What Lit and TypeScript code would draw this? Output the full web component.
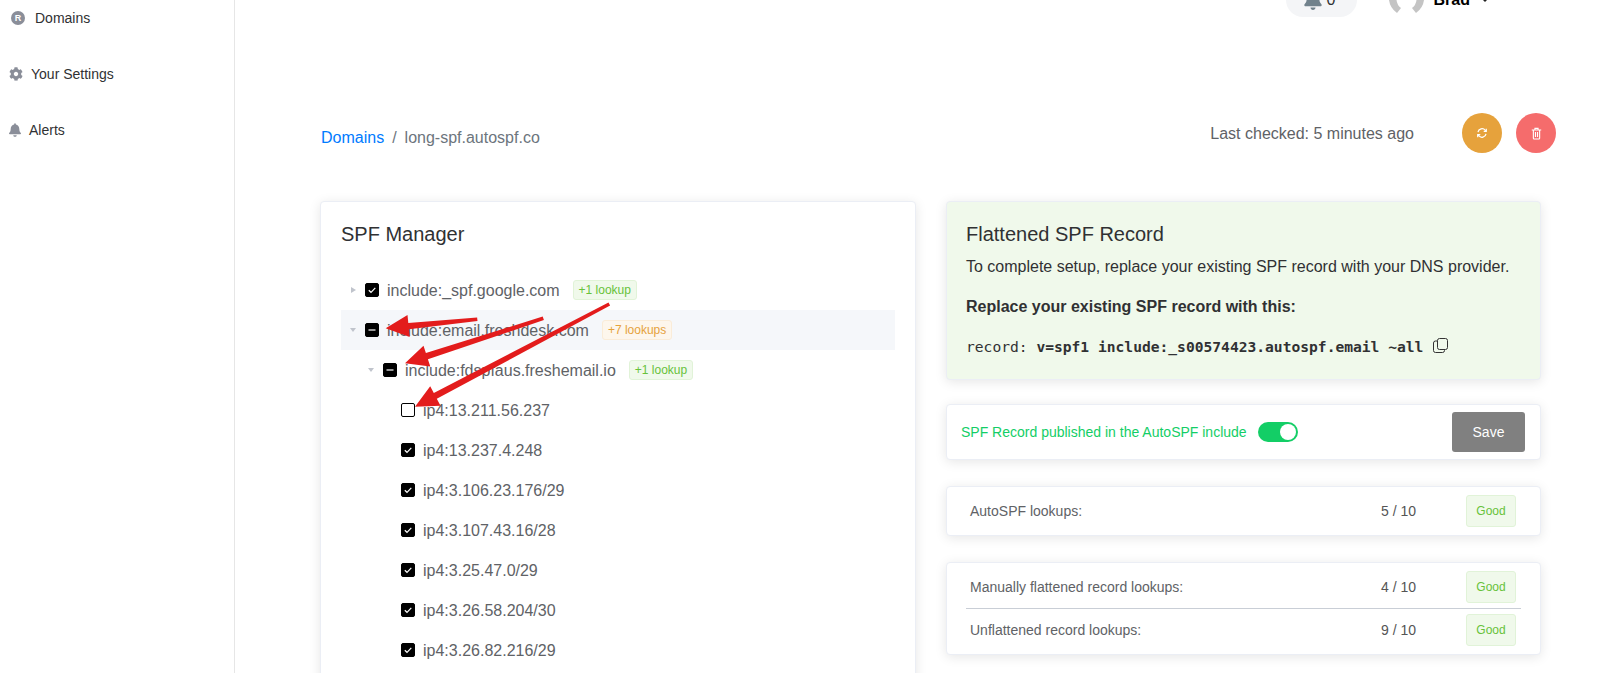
import { LitElement, html, css, svg } from "lit";
import { customElement } from "lit/decorators.js";

const BELL = "M224 512c35.32 0 63.97-28.65 63.97-64H160.03c0 35.35 28.65 64 63.97 64zm215.39-149.71c-19.32-20.76-55.47-51.99-55.47-154.29 0-77.7-54.48-139.9-127.94-155.16V32c0-17.67-14.32-32-31.98-32s-31.98 14.33-31.98 32v20.84C118.56 68.1 64.08 130.3 64.08 208c0 102.3-36.15 133.53-55.47 154.29-6 6.45-8.66 14.16-8.61 21.71.11 16.4 12.98 32 32.1 32h383.8c19.12 0 32-15.6 32.1-32 .05-7.55-2.61-15.27-8.61-21.71z";
const COG = "M487.4 315.7l-42.6-24.6c4.3-23.2 4.3-47 0-70.2l42.6-24.6c4.9-2.8 7.1-8.6 5.5-14-11.1-35.6-30-67.8-54.7-94.6-3.8-4.1-10-5.1-14.8-2.3L380.8 110c-17.9-15.4-38.5-27.3-60.8-35.1V25.8c0-5.6-3.9-10.5-9.4-11.7-36.7-8.2-74.3-7.8-109.2 0-5.5 1.2-9.4 6.1-9.4 11.7V75c-22.2 7.9-42.8 19.8-60.8 35.1L88.7 85.5c-4.9-2.8-11-1.9-14.8 2.3-24.7 26.7-43.6 58.9-54.7 94.6-1.7 5.4.6 11.2 5.5 14L67.3 221c-4.3 23.2-4.3 47 0 70.2l-42.6 24.6c-4.9 2.8-7.1 8.6-5.5 14 11.1 35.6 30 67.8 54.7 94.6 3.8 4.1 10 5.1 14.8 2.3l42.6-24.6c17.9 15.4 38.5 27.3 60.8 35.1v49.2c0 5.6 3.9 10.5 9.4 11.7 36.7 8.2 74.3 7.8 109.2 0 5.5-1.2 9.4-6.1 9.4-11.7v-49.2c22.2-7.9 42.8-19.8 60.8-35.1l42.6 24.6c4.9 2.8 11 1.9 14.8-2.3 24.7-26.7 43.6-58.9 54.7-94.6 1.5-5.5-.7-11.3-5.6-14.1zM256 336c-44.1 0-80-35.9-80-80s35.9-80 80-80 80 35.9 80 80-35.9 80-80 80z";

type Row = { level: number; text: string; arrow?: "right" | "down"; state: "on" | "mixed" | "off"; tag?: string; warn?: boolean; hl?: boolean };

const ROWS: Row[] = [
  { level: 0, text: "include:_spf.google.com", arrow: "right", state: "on", tag: "+1 lookup" },
  { level: 0, text: "include:email.freshdesk.com", arrow: "down", state: "mixed", tag: "+7 lookups", warn: true, hl: true },
  { level: 1, text: "include:fdspfaus.freshemail.io", arrow: "down", state: "mixed", tag: "+1 lookup" },
  { level: 2, text: "ip4:13.211.56.237", state: "off" },
  { level: 2, text: "ip4:13.237.4.248", state: "on" },
  { level: 2, text: "ip4:3.106.23.176/29", state: "on" },
  { level: 2, text: "ip4:3.107.43.16/28", state: "on" },
  { level: 2, text: "ip4:3.25.47.0/29", state: "on" },
  { level: 2, text: "ip4:3.26.58.204/30", state: "on" },
  { level: 2, text: "ip4:3.26.82.216/29", state: "on" },
];

const ARROWS = [
  [477.3, 319.3, 385.7, 328.3],
  [543.3, 318.3, 405, 363.3],
  [609.3, 304, 415, 406.7],
];

function arrowPoints([x1, y1, x2, y2]: number[]) {
  const dx = x2 - x1, dy = y2 - y1;
  const len = Math.hypot(dx, dy);
  const ux = dx / len, uy = dy / len;
  const nx = -uy, ny = ux;
  const head = 23, hw = 11;
  const bx = x2 - ux * head, by = y2 - uy * head;
  const p = [
    [x1 + nx * 1.8, y1 + ny * 1.8],
    [bx + nx * 3.2, by + ny * 3.2],
    [bx + nx * hw, by + ny * hw],
    [x2, y2],
    [bx - nx * hw, by - ny * hw],
    [bx - nx * 3.2, by - ny * 3.2],
    [x1 - nx * 1.8, y1 - ny * 1.8],
  ];
  return p.map((q) => q.map((v) => v.toFixed(1)).join(",")).join(" ");
}

@customElement("app-root")
export class AppRoot extends LitElement {
  static styles = css`
    :host {
      display: block;
      position: relative;
      height: 673px;
      overflow: hidden;
      background: #fff;
      font-family: "Liberation Sans", Arial, sans-serif;
      color: #303133;
    }
    * { box-sizing: border-box; }
    .layout { display: grid; grid-template-columns: 235px 1fr; height: 673px; }
    .side { border-right: 1px solid #e6e6e6; display: flex; flex-direction: column; gap: 20px; padding-left: 9px; }
    .nav { height: 36px; display: flex; align-items: center; gap: 8px; font-size: 14px; color: #303133; }
    .nav svg { fill: #8a8e99; display: block; }
    .r-icon {
      width: 14px; height: 14px; border-radius: 50%; background: #8a8e99; color: #fff;
      font-size: 9px; font-weight: 700; display: flex; align-items: center; justify-content: center;
      margin: 0 2px 0 2px;
    }
    .main { padding: 0 41px 0 85px; min-width: 0; }
    .top { height: 17px; overflow: hidden; display: flex; justify-content: flex-end; align-items: flex-end; padding-right: 68px; }
    .pill {
      width: 71px; height: 40px; flex: none; border-radius: 0 0 17px 17px / 0 0 17px 17px; background: #f4f5f7;
      display: flex; align-items: center; justify-content: flex-start; padding: 6px 0 0 18px; gap: 5px;
      font-size: 16px; color: #303133;
    }
    .pill svg { fill: #71828c; display: block; }
    .avatar { margin-left: 32px; display: block; flex: none; align-self: flex-start; }
    .user { margin-left: 10px; height: 40px; padding-top: 6px; display: flex; align-items: center; font-size: 16px; font-weight: 700; color: #000; gap: 12px; flex: none; }
    .caret { width: 0; height: 0; border: 3px solid transparent; border-top-color: #222; border-bottom: 0; }
    .head { margin-top: 96px; height: 40px; display: flex; align-items: center; font-size: 16px; }
    .crumbs { flex: 1; padding: 10px 0 0 1px; color: #6c757d; display: flex; gap: 8px; }
    .crumbs a { color: #007bff; text-decoration: none; }
    .checked { color: #606266; margin-right: 48px; padding-top: 2px; }
    .round { width: 40px; height: 40px; border-radius: 50%; display: flex; align-items: center; justify-content: center; }
    .round svg { fill: none; stroke: #fff; stroke-width: 1.4; display: block; }
    .sync { background: #e6a23c; }
    .del { background: #f56c6c; margin-left: 14px; }
    .grid { margin: 48px 15px 0 0; display: grid; grid-template-columns: 596px 595px; gap: 30px; align-items: start; }
    .card { background: #fff; border: 1px solid #ebeef5; border-radius: 4px; box-shadow: 0 2px 12px rgba(0, 0, 0, 0.1); }
    .mgr { padding: 20px; }
    h2 { margin: 0; font-size: 20px; font-weight: 400; line-height: 24px; color: #303133; }
    .tree { margin-top: 24px; }
    .row { height: 40px; display: flex; align-items: center; font-size: 16px; color: #606266; }
    .row.hl { background: #f5f7fa; }
    .label { padding-top: 2px; }
    .slot { width: 24px; flex: none; display: flex; justify-content: center; }
    .tri-r { width: 0; height: 0; border-left: 5px solid #c0c4cc; border-top: 3.5px solid transparent; border-bottom: 3.5px solid transparent; }
    .tri-d { width: 0; height: 0; border-top: 4px solid #c0c4cc; border-left: 3.5px solid transparent; border-right: 3.5px solid transparent; }
    .box { width: 14px; height: 14px; flex: none; border-radius: 2px; background: #000; border: 1px solid #000; margin-right: 8px; display: flex; align-items: center; justify-content: center; }
    .box.off { background: #fff; }
    .box svg { display: block; fill: none; stroke: #fff; stroke-width: 1.2; }
    .tag { margin-left: 13px; height: 20px; padding: 0 5px; border: 1px solid #e1f3d8; background: #f0f9eb; color: #67c23a; border-radius: 3px; font-size: 12px; line-height: 18px; white-space: nowrap; }
    .tag.warn { border-color: #faecd8; background: #fdf6ec; color: #e6a23c; }
    .right { display: flex; flex-direction: column; }
    .green { background: #f0f9eb; height: 179px; padding: 20px 19px; }
    .green p { margin: 9px 0 0; font-size: 16px; line-height: 24px; color: #303133; white-space: nowrap; }
    .green p.b { margin-top: 16px; font-weight: 700; }
    .code { margin-top: 17px; display: flex; align-items: center; height: 20px; font-family: "DejaVu Sans Mono", monospace; font-size: 14.62px; color: #303133; white-space: pre; gap: 10px; }
    .code b { font-weight: 700; }
    .code svg { display: block; fill: none; stroke: #333; stroke-width: 1; margin-top: -2px; }
    .publish { margin-top: 24px; height: 56px; padding: 0 15px 0 14px; display: flex; align-items: center; font-size: 14px; color: #13ce66; }
    .toggle { width: 40px; height: 20px; border-radius: 10px; background: #13ce66; margin-left: 11px; display: flex; justify-content: flex-end; padding: 2px; }
    .toggle i { width: 16px; height: 16px; border-radius: 50%; background: #fff; display: block; }
    .save { margin-left: auto; width: 73px; height: 40px; background: #808080; color: #fff; border-radius: 3px; display: flex; align-items: center; justify-content: center; font-size: 14px; }
    .stat { margin-top: 26px; padding: 8px 19px; }
    .line { display: grid; grid-template-columns: 1fr 85px 50px; align-items: center; padding: 0 5px 0 4px; height: 32px; font-size: 14px; color: #606266; }
    .val { color: #555; }
    .good { height: 32px; border: 1px solid #e1f3d8; background: #f0f9eb; color: #67c23a; border-radius: 3px; font-size: 12px; display: flex; align-items: center; justify-content: center; }
    .div { height: 1px; background: #c9ced6; margin: 5px 0; }
    .overlay { position: absolute; left: 0; top: 0; pointer-events: none; }
  `;

  private box(state: Row["state"]) {
    if (state === "off") return html`<span class="box off"></span>`;
    if (state === "mixed")
      return html`<span class="box"><svg width="8" height="8" viewBox="0 0 8 8"><path d="M0.5 4h7" /></svg></span>`;
    return html`<span class="box"><svg width="10" height="10" viewBox="0 0 10 10"><path d="M1.8 5.2l2.2 2.1 4.3-4.4" /></svg></span>`;
  }

  render() {
    return html`
      <div class="layout">
        <aside class="side">
          <div class="nav"><span class="r-icon">R</span>Domains</div>
          <div class="nav"><svg width="14" height="14" viewBox="0 0 512 512"><path d=${COG} /></svg>Your Settings</div>
          <div class="nav"><svg width="12" height="14" viewBox="0 0 448 512"><path d=${BELL} /></svg>Alerts</div>
        </aside>
        <main class="main">
          <div class="top">
            <div class="pill">
              <svg width="18" height="20" viewBox="0 0 448 512"><path d=${BELL} /></svg><span>0</span>
            </div>
            <svg class="avatar" width="35" height="13" viewBox="0 0 35 13">
              <path fill="#c4c4c4" d="M0 0h7.5q.5 5 4.5 8l-4 5Q1 8 0 0zM35 0h-7.5q-.5 5-4.5 8l4 5Q34 8 35 0z" />
            </svg>
            <div class="user"><span>Brad</span><span class="caret"></span></div>
          </div>
          <div class="head">
            <div class="crumbs"><a>Domains</a><span>/</span><span>long-spf.autospf.co</span></div>
            <span class="checked">Last checked: 5 minutes ago</span>
            <div class="round sync">
              <svg width="12" height="12" viewBox="0 0 14 14">
                <path d="M2.3 6A4.8 4.8 0 0 1 10.8 3.8L12 5M11.7 8A4.8 4.8 0 0 1 3.2 10.2L2 9" />
                <path d="M12 2v3H9M2 12V9h3" />
              </svg>
            </div>
            <div class="round del">
              <svg width="11" height="13" viewBox="0 0 14 16">
                <path d="M1 3.5h12M3 3.5V14a1 1 0 0 0 1 1h6a1 1 0 0 0 1-1V3.5M5 3.5V1.5h4v2M5.7 6v6.5M8.3 6v6.5" />
              </svg>
            </div>
          </div>
          <div class="grid">
            <section class="card mgr">
              <h2>SPF Manager</h2>
              <div class="tree">
                ${ROWS.map(
                  (r) => html`
                    <div class="row ${r.hl ? "hl" : ""}" style="padding-left:${r.level * 18}px">
                      <span class="slot">${r.arrow ? html`<span class="${r.arrow === "right" ? "tri-r" : "tri-d"}"></span>` : ""}</span>
                      ${this.box(r.state)}
                      <span class="label">${r.text}</span>
                      ${r.tag ? html`<span class="tag ${r.warn ? "warn" : ""}">${r.tag}</span>` : ""}
                    </div>
                  `
                )}
              </div>
            </section>
            <div class="right">
              <section class="card green">
                <h2>Flattened SPF Record</h2>
                <p>To complete setup, replace your existing SPF record with your DNS provider.</p>
                <p class="b">Replace your existing SPF record with this:</p>
                <div class="code">
                  <span>record: <b>v=spf1 include:_s00574423.autospf.email ~all</b></span>
                  <svg width="15" height="15" viewBox="0 0 15 15">
                    <rect x="4.5" y="0.5" width="10" height="11" rx="2" />
                    <path d="M4.5 3H2.5a2 2 0 0 0-2 2v7.5a2 2 0 0 0 2 2h7a2 2 0 0 0 2-2v-1" />
                  </svg>
                </div>
              </section>
              <section class="card publish">
                <span>SPF Record published in the AutoSPF include</span>
                <span class="toggle"><i></i></span>
                <span class="save">Save</span>
              </section>
              <section class="card stat">
                <div class="line"><span>AutoSPF lookups:</span><span class="val">5 / 10</span><span class="good">Good</span></div>
              </section>
              <section class="card stat">
                <div class="line"><span>Manually flattened record lookups:</span><span class="val">4 / 10</span><span class="good">Good</span></div>
                <div class="div"></div>
                <div class="line"><span>Unflattened record lookups:</span><span class="val">9 / 10</span><span class="good">Good</span></div>
              </section>
            </div>
          </div>
        </main>
      </div>
      <svg class="overlay" width="1597" height="673" viewBox="0 0 1597 673">
        ${ARROWS.map((a) => svg`<polygon fill="#e31c1c" points=${arrowPoints(a)} />`)}
      </svg>
    `;
  }
}
